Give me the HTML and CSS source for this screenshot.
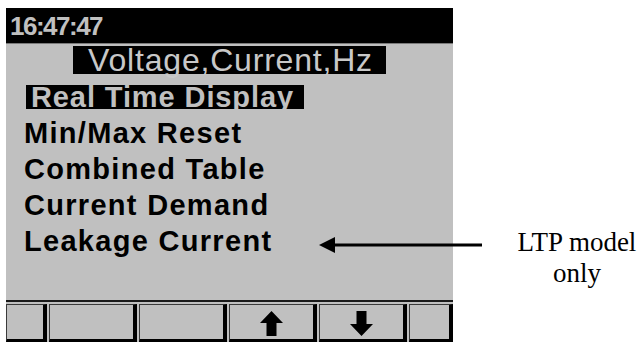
FILE: index.html
```html
<!DOCTYPE html>
<html>
	<head>
		<meta charset="utf-8">
		<title>Voltage, Current, Hz</title>
		<link rel="stylesheet" href="styles.css">
	</head>
	<body>
		<div class="page">
			<div class="screen">
				<div class="clock">16:47:47</div>
				<div class="title"><span>Voltage,Current,Hz</span></div>
				<ul class="menu">
					<li><span class="sel">Real Time Display</span></li>
					<li><span>Min/Max Reset</span></li>
					<li><span>Combined Table</span></li>
					<li><span>Current Demand</span></li>
					<li><span>Leakage Current</span></li>
				</ul>
				<div class="spacer"></div>
				<div class="keys">
					<div class="key"></div>
					<div class="key"></div>
					<div class="key"></div>
					<div class="key">
						<svg width="23" height="25" viewBox="0 0 23 25"><polygon points="11.5,0 23,12 16.5,12 16.5,25 6.5,25 6.5,12 0,12" fill="#000"/></svg>
					</div>
					<div class="key">
						<svg width="23" height="25" viewBox="0 0 23 25"><polygon points="11.5,25 23,13 16.5,13 16.5,0 6.5,0 6.5,13 0,13" fill="#000"/></svg>
					</div>
					<div class="key"></div>
				</div>
			</div>
			<div class="note">LTP model<br>only</div>
			<!-- pointer drawn over the screen edge -->
			<svg class="pointer" width="163" height="16" viewBox="0 0 163 16">
				<polygon points="0,8 16,0 16,16" fill="#000"/>
				<rect x="14" y="6.5" width="149" height="3" fill="#000"/>
			</svg>
		</div>
	</body>
</html>
```

FILE: styles.css
```css
* {
	margin: 0;
	padding: 0;
	box-sizing: border-box;
}

html, body {
	width: 639px;
	height: 342px;
	overflow: hidden;
	background-color: #fff;
}

.page {
	position: relative;
	display: flex;
	align-items: flex-start;
	padding: 8px 0 0 6px;
}

.screen {
	display: flex;
	flex-direction: column;
	width: 447px;
	height: 334px;
	background-color: #c0c0c0;
	font-family: "Liberation Sans", Arial, sans-serif;
}

.clock {
	height: 36px;
	padding: 1px 0 0 4px;
	line-height: 35px;
	background-color: #000;
	border-bottom: 1px solid #7a7a7a;
	color: #c0c0c0;
	font-size: 26px;
	font-weight: bold;
	letter-spacing: -1.5px;
}

.title {
	margin-top: 2px;
	height: 28px;
	text-align: center;
}

.title span {
	display: inline-block;
	height: 28px;
	padding: 0 13px 0 15px;
	line-height: 28px;
	background-color: #000;
	color: #c8c8c8;
	font-size: 32px;
	letter-spacing: 0.8px;
}

.menu {
	margin-top: 5px;
	list-style: none;
}

.menu li {
	display: flex;
	align-items: center;
	height: 36px;
	padding-left: 18px;
	color: #000;
	font-size: 29px;
	font-weight: bold;
	letter-spacing: 1.3px;
}

.menu li span {
	display: inline-block;
	height: 24px;
	line-height: 24px;
}

.menu li .sel {
	margin-left: 2px;
	padding: 0 10px 0 5px;
	background-color: #000;
	color: #c0c0c0;
	letter-spacing: 0.9px;
}

.spacer {
	flex: 1;
}

.keys {
	display: grid;
	grid-template-columns: 41px 88px 88px 88px 88px 1fr;
	gap: 2px;
	height: 42px;
	padding-top: 2px;
	border-top: 2px solid #1a1a1a;
}

.key {
	display: flex;
	justify-content: center;
	padding-top: 6px;
	background-color: #c0c0c0;
	border-top: 1px solid #3a3a3a;
	border-left: 1px solid #3a3a3a;
	border-right: 4px solid #000;
	border-bottom: 3px solid #000;
}

.note {
	width: 122px;
	margin: 219px 0 0 63px;
	line-height: 31px;
	text-align: center;
	font-family: "Liberation Serif", "Times New Roman", serif;
	font-size: 27px;
	color: #000;
}

.pointer {
	position: absolute;
	left: 319px;
	top: 237px;
}
```
